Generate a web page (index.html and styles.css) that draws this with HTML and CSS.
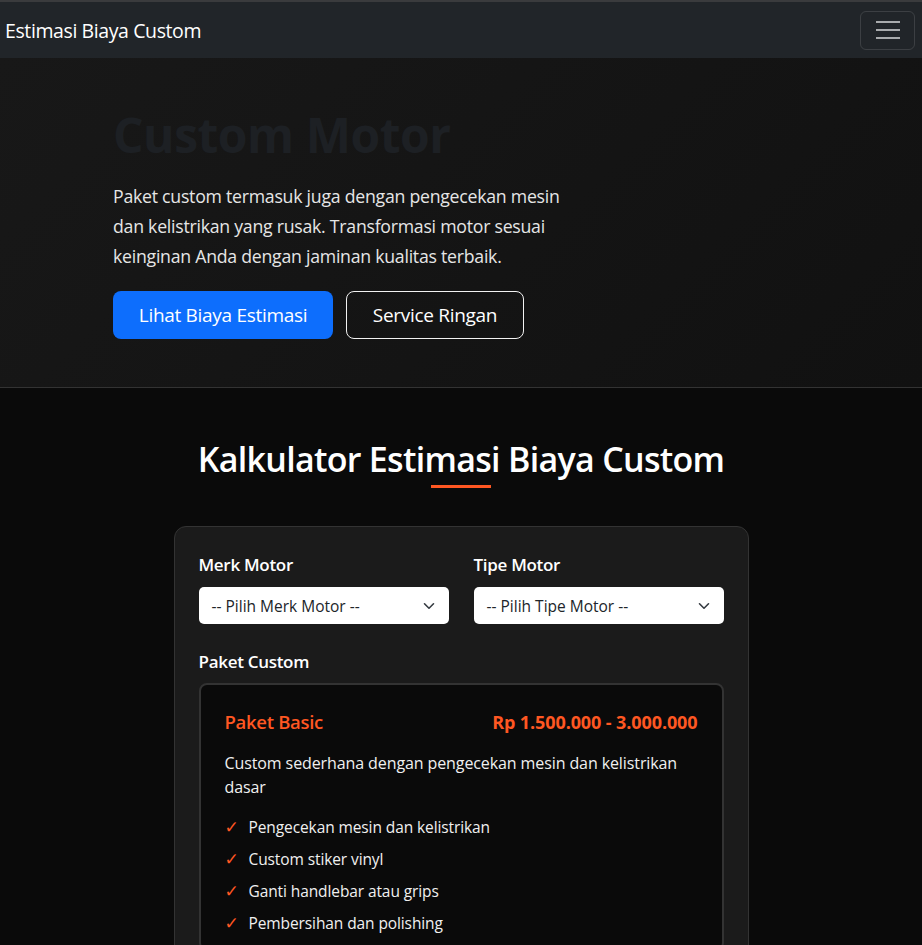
FILE: index.html
```html
<!DOCTYPE html>
<html lang="id">
<head>
<meta charset="utf-8">
<title>Estimasi Biaya Custom</title>
<link rel="stylesheet" href="styles.css">
</head>
<body>
<nav class="navbar">
  <a class="brand" href="#">Estimasi Biaya Custom</a>
  <button class="toggler" aria-label="menu">
    <span class="bar"></span><span class="bar"></span><span class="bar"></span>
  </button>
</nav>
<header class="hero">
  <div class="container">
    <h1 class="hero-title">Custom Motor</h1>
    <p class="hero-text">Paket custom termasuk juga dengan pengecekan mesin dan kelistrikan yang rusak. Transformasi motor sesuai keinginan Anda dengan jaminan kualitas terbaik.</p>
    <div class="hero-actions">
      <a class="btn btn-primary" href="#">Lihat Biaya Estimasi</a>
      <a class="btn btn-outline" href="#">Service Ringan</a>
    </div>
  </div>
</header>
<section class="calc">
  <h2 class="calc-title">Kalkulator Estimasi Biaya Custom</h2>
  <div class="calc-card">
    <div class="row">
      <div class="field">
        <label class="label">Merk Motor</label>
        <div class="select"><span>-- Pilih Merk Motor --</span>
          <svg width="12" height="8" viewBox="0 0 12 8"><path d="M1.5 1.8 6 6.2l4.5-4.4" fill="none" stroke="#343a40" stroke-width="1.6" stroke-linecap="round" stroke-linejoin="round"/></svg>
        </div>
      </div>
      <div class="field">
        <label class="label">Tipe Motor</label>
        <div class="select"><span>-- Pilih Tipe Motor --</span>
          <svg width="12" height="8" viewBox="0 0 12 8"><path d="M1.5 1.8 6 6.2l4.5-4.4" fill="none" stroke="#343a40" stroke-width="1.6" stroke-linecap="round" stroke-linejoin="round"/></svg>
        </div>
      </div>
    </div>
    <label class="label paket-label">Paket Custom</label>
    <div class="paket">
      <div class="paket-head">
        <span class="paket-name">Paket Basic</span>
        <span class="paket-price">Rp 1.500.000 - 3.000.000</span>
      </div>
      <p class="paket-desc">Custom sederhana dengan pengecekan mesin dan kelistrikan dasar</p>
      <ul class="features">
        <li><span class="check">✓</span>Pengecekan mesin dan kelistrikan</li>
        <li><span class="check">✓</span>Custom stiker vinyl</li>
        <li><span class="check">✓</span>Ganti handlebar atau grips</li>
        <li><span class="check">✓</span>Pembersihan dan polishing</li>
      </ul>
    </div>
  </div>
</section>
</body>
</html>
```
FILE: styles.css
```css
* { box-sizing: border-box; }
html, body { margin: 0; padding: 0; }
body {
  background: #0a0a0a;
  color: #e9ecef;
  font-family: "Open Sans", "Noto Sans", "DejaVu Sans", sans-serif;
}
.navbar {
  height: 58px;
  background: #212529;
  border-top: 2px solid #3a3b3d;
  display: flex;
  align-items: center;
  justify-content: space-between;
  padding: 0 7px 0 5px;
}
.brand {
  color: #fff;
  text-decoration: none;
  font-size: 19.5px;
  letter-spacing: -0.4px;
}
.toggler {
  width: 55px;
  height: 39px;
  background: transparent;
  border: 1px solid rgba(255,255,255,0.12);
  border-radius: 6px;
  display: flex;
  flex-direction: column;
  align-items: center;
  justify-content: center;
  gap: 6px;
  padding: 0;
}
.toggler .bar {
  display: block;
  width: 24px;
  height: 2px;
  background: #a9abad;
}
.hero {
  background: linear-gradient(135deg, #181818 0%, #111111 100%);
  border-bottom: 1px solid #333;
  padding: 48px 0 48px;
}
.container {
  width: 720px;
  margin: 0 auto;
  padding: 0 12px;
}
.hero-title {
  margin: 0 0 17px;
  font-size: 48px;
  line-height: 58px;
  font-weight: 700;
  color: #1d2024;
  letter-spacing: -0.5px;
}
.hero-text {
  margin: 0 0 20px;
  max-width: 460px;
  font-size: 17.7px;
  line-height: 30px;
  color: #e6e6e6;
  letter-spacing: -0.25px;
}
.hero-actions {
  display: flex;
  gap: 13px;
}
.btn {
  display: inline-flex;
  align-items: center;
  justify-content: center;
  height: 48px;
  border-radius: 8px;
  font-size: 19px;
  text-decoration: none;
  color: #fff;
  letter-spacing: -0.3px;
}
.btn-primary {
  background: #0d6efd;
  width: 220px;
}
.btn-outline {
  border: 1px solid #f2f2f2;
  width: 178px;
}
.calc {
  padding: 46px 0 0;
}
.calc-title {
  margin: 0 auto;
  text-align: center;
  font-size: 34px;
  line-height: 50px;
  font-weight: 600;
  color: #fff;
  letter-spacing: -0.7px;
}
.calc-title::after {
  content: "";
  display: block;
  width: 60px;
  height: 3px;
  background: #ff5722;
  margin: 1px auto 0;
}
.calc-card {
  width: 575px;
  margin: 38px auto 0;
  background: #1b1b1b;
  border: 1px solid #333;
  border-radius: 12px;
  padding: 26px 24px 40px;
}
.row {
  display: flex;
  gap: 25px;
}
.field { flex: 1; }
.label {
  display: block;
  font-size: 17px;
  font-weight: 600;
  line-height: 24px;
  color: #fff;
  margin-bottom: 10px;
  letter-spacing: -0.3px;
}
.select {
  height: 37px;
  background: #fff;
  border-radius: 5px;
  display: flex;
  align-items: center;
  justify-content: space-between;
  padding: 0 14px 0 13px;
  font-size: 15.5px;
  color: #212529;
  letter-spacing: 0;
}
.paket-label {
  margin-top: 26px;
  margin-bottom: 9px;
}
.paket {
  background: #0a0a0a;
  border: 2px solid #333;
  border-radius: 8px;
  padding: 24px 24px 10px;
}
.paket-head {
  display: flex;
  justify-content: space-between;
  align-items: baseline;
  color: #ff5722;
}
.paket-name {
  font-size: 18.5px;
  font-weight: 600;
  letter-spacing: -0.3px;
}
.paket-price {
  font-size: 18px;
  font-weight: 700;
  letter-spacing: -0.1px;
}
.paket-desc {
  margin: 17px 0 12px;
  font-size: 16px;
  line-height: 24px;
  color: #f0f0f0;
  letter-spacing: -0.1px;
}
.features {
  list-style: none;
  margin: 0;
  padding: 0;
}
.features li {
  display: flex;
  align-items: center;
  height: 32px;
  font-size: 15.5px;
  color: #f0f0f0;
  letter-spacing: -0.1px;
}
.check {
  color: #ff5722;
  width: 24px;
  font-family: "DejaVu Sans", sans-serif;
  font-size: 17px;
}
```
